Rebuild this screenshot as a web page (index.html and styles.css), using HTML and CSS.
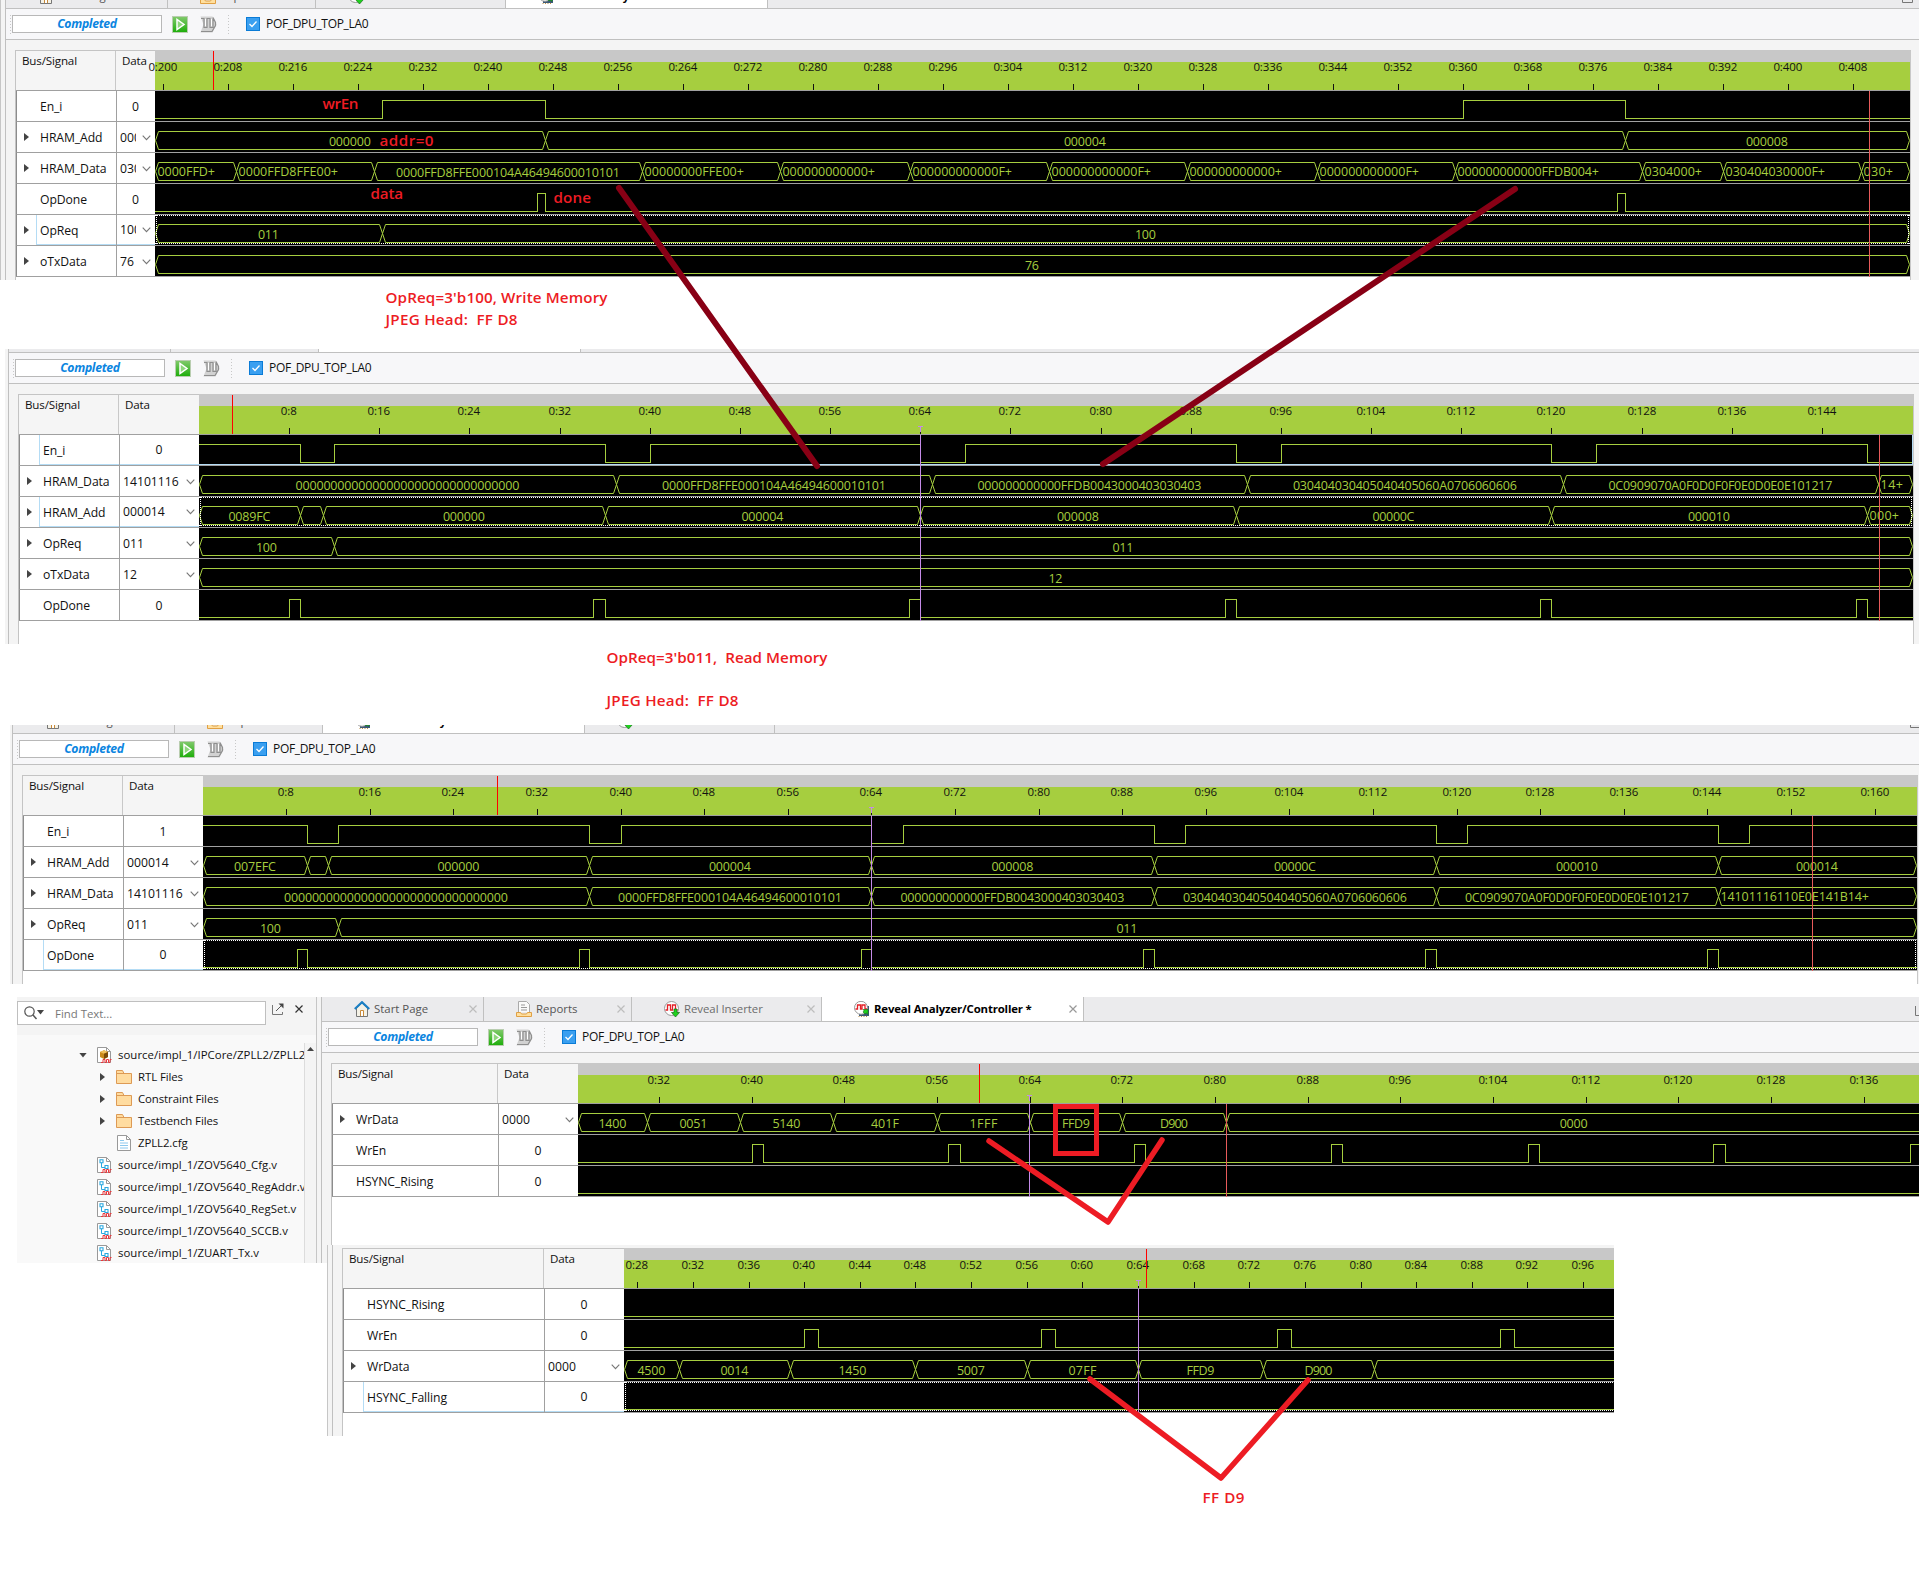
FILE: index.html
```html
<!DOCTYPE html>
<html lang="en">
<head>
<meta charset="utf-8">
<title>Reveal Analyzer captures</title>
<link rel="stylesheet" href="styles.css">
</head>
<body>
<svg class="defs" aria-hidden="true">
  <defs>
    <linearGradient id="runFill" x1="0" y1="0" x2="0" y2="1"><stop offset="0" stop-color="#7fc96a"/><stop offset="1" stop-color="#1fae0c"/></linearGradient>
    <symbol id="i-run" viewBox="0 0 16 17"><rect width="16" height="17" fill="#b9cdb0"/><rect x="1" y="1" width="14" height="15" fill="url(#runFill)"/><path d="M5 3.500v10l7-5z" fill="#8ed67c" stroke="#fff" stroke-width="1.500"/></symbol>
    <symbol id="i-wave" viewBox="0 0 17 17"><path d="M.5.5h12l4 8-4 8H.5l3-8z" fill="#d2d2d2"/><path d="M1 2.500h3v9h3v-9h3v9h3v-9M1 15.500h11l3.500-6v-3l-2.500-5" fill="none" stroke="#8f8f8f" stroke-width="1.200"/><path d="M5.500 3v7M11.500 3v7" stroke="#fff" stroke-width="1"/></symbol>
    <symbol id="i-home" viewBox="0 0 16 16"><path d="M2.500 7v8.500h11V7L8 2z" fill="#f4f1e6" stroke="#777"/><path d="M6.500 15V9.500h3V15" fill="#fff" stroke="#c98a3a"/><path d="M.8 8L8 1.200 15.200 8" fill="none" stroke="#1b7fc4" stroke-width="2.200"/></symbol>
    <symbol id="i-report" viewBox="0 0 16 16"><path d="M2.500 11V.5h8l3 3V11" fill="#fafafa" stroke="#aaa"/><path d="M5 4h4M5 6.500h6M5 9h6" stroke="#999"/><path d="M.5 11.500h4l1 1.500h5l1-1.500h4v4H.5z" fill="#ffdf9e" stroke="#e0a044"/></symbol>
    <symbol id="i-insert" viewBox="0 0 16 16"><circle cx="7.500" cy="7.500" r="7" fill="#fff" stroke="#999"/><path d="M1.500 9h2V4h3v5h2V4h3v5h2" fill="none" stroke="#e31f26" stroke-width="1.300"/><path d="M10 8h3v3.500h2.500L11.500 16 7.500 11.500H10z" fill="#1fd11f" stroke="#176b17" stroke-width=".7"/></symbol>
    <symbol id="i-analyze" viewBox="0 0 16 16"><path d="M5 5h10v10H5z" fill="#3c5a78"/><path d="M5 15v1M7.500 15v1M10 15v1M12.500 15v1" stroke="#bd8f44"/><circle cx="7" cy="6.800" r="6.500" fill="#fff" stroke="#999"/><path d="M1.500 8h2V4h3v4h1.500V4h3v4h2" fill="none" stroke="#e31f26" stroke-width="1.300"/><path d="M9 8.500h5v5l-1.700-1.500-1.300 1-2-2 1-1.300z" fill="#1fd11f" stroke="#176b17" stroke-width=".6"/></symbol>
    <symbol id="i-float" viewBox="0 0 12 12"><path d="M.5 2v9.500h10V9" fill="none" stroke="#777"/><path d="M4 8l6-6" stroke="#555"/><path d="M6.500.5h5v5z" fill="#444"/></symbol>
    <symbol id="i-x" viewBox="0 0 8 8"><path d="M.5.5l7 7M7.500.5l-7 7" fill="none" stroke="currentColor" stroke-width="1.200"/></symbol>
    <symbol id="i-src" viewBox="0 0 15 17"><path d="M.5.500h9l4 4v11H.5z" fill="#fff" stroke="#999"/><path d="M9.500.5v4h4" fill="none" stroke="#999"/><path d="M4.500 5v5.500h4" fill="none" stroke="#29a8e0"/><path d="M3 2.800h3v3H3zM8 8.500h3v3H8z" fill="#fff" stroke="#29a8e0" stroke-width="1.100"/><path d="M4 15.500h2v-3h2v3h1.500v-3h2v3H13v-3h1.500" fill="none" stroke="#e8383d"/></symbol>
    <symbol id="i-core" viewBox="0 0 15 17"><path d="M.5.500h9l4 4v11H.5z" fill="#fff" stroke="#999"/><path d="M9.500.5v4h4" fill="none" stroke="#999"/><path d="M3 5l4-1.800L11 5v5l-4 2-4-2z" fill="#c98a1c"/><path d="M3 5l4 1.700L11 5 7 3.200z" fill="#efc15c"/><path d="M7 6.700L11 5v5l-4 2z" fill="#7a4b08"/><path d="M4 15.500h2v-3h2v3h1.500v-3h2v3H13v-3h1.500" fill="none" stroke="#e8383d"/></symbol>
    <symbol id="i-folder" viewBox="0 0 16 14"><path d="M.5 13.500V.5h6l1.500 3h7.500v10z" fill="#ffdca0" stroke="#dd9a55"/><path d="M1 3.500h8" stroke="#dd9a55"/></symbol>
    <symbol id="i-doc" viewBox="0 0 14 16"><path d="M.5.500h9l4 4v11H.5z" fill="#fff" stroke="#999"/><path d="M9.500.5v4h4" fill="none" stroke="#999"/><path d="M3 5.500h4M3 8h8M3 10.500h8M3 13h8" stroke="#8cc8ee"/></symbol>
  </defs>
</svg>

<main class="board">
  <section class="capture write" id="write"></section>
  <section class="capture read" id="read"></section>
  <section class="capture reread" id="reread"></section>
  <div class="split">
    <aside class="dock">
      <header class="dock-head">
        <div class="search">
          <svg width="20" height="14" viewBox="0 0 20 14"><circle cx="5.500" cy="5.500" r="4.700" fill="none" stroke="#555" stroke-width="1.200"/><path d="M9 9l3.500 4" stroke="#555" stroke-width="1.500"/><path d="M13 4h7l-3.500 4.500z" fill="#444"/></svg>
          <span>Find Text...</span>
        </div>
        <svg class="dock-float" width="12" height="12"><use href="#i-float"/></svg>
        <svg class="dock-x" width="8" height="8"><use href="#i-x"/></svg>
      </header>
      <div class="dock-body">
        <ul class="tree">
          <li class="l1"><i class="tw down"></i><svg width="15" height="17"><use href="#i-core"/></svg>source/impl_1/IPCore/ZPLL2/ZPLL2.ipx</li>
          <li class="l2"><i class="tw"></i><svg width="16" height="14"><use href="#i-folder"/></svg>RTL Files</li>
          <li class="l2"><i class="tw"></i><svg width="16" height="14"><use href="#i-folder"/></svg>Constraint Files</li>
          <li class="l2"><i class="tw"></i><svg width="16" height="14"><use href="#i-folder"/></svg>Testbench Files</li>
          <li class="l2"><i class="tw none"></i><svg width="16" height="16"><use href="#i-doc"/></svg>ZPLL2.cfg</li>
          <li class="l1"><i class="tw none"></i><svg width="15" height="17"><use href="#i-src"/></svg>source/impl_1/ZOV5640_Cfg.v</li>
          <li class="l1"><i class="tw none"></i><svg width="15" height="17"><use href="#i-src"/></svg>source/impl_1/ZOV5640_RegAddr.v</li>
          <li class="l1"><i class="tw none"></i><svg width="15" height="17"><use href="#i-src"/></svg>source/impl_1/ZOV5640_RegSet.v</li>
          <li class="l1"><i class="tw none"></i><svg width="15" height="17"><use href="#i-src"/></svg>source/impl_1/ZOV5640_SCCB.v</li>
          <li class="l1"><i class="tw none"></i><svg width="15" height="17"><use href="#i-src"/></svg>source/impl_1/ZUART_Tx.v</li>
        </ul>
        <div class="scroll"><i></i></div>
      </div>
    </aside>
    <section class="capture tail" id="tail"></section>
  </div>
  <section class="capture zoomed" id="zoomed"></section>

  <svg class="notes" width="1919" height="1594" viewBox="0 0 1919 1594">
    <g class="dark"><path d="M619 188L817 466"/><path d="M1515 189L1103 464"/></g>
    <g class="bright"><path d="M989 1141L1108 1222L1162 1140"/><path d="M1090 1379L1221 1478L1308 1380"/><path class="box" d="M1055.500 1106.500h41v47h-41z"/></g>
    <text x="322.500" y="109" textLength="36">wrEn</text>
    <text x="379.500" y="146" textLength="54">addr=0</text>
    <text x="370.500" y="199" textLength="32.500">data</text>
    <text x="553.500" y="203" textLength="37.500">done</text>
    <text x="385.500" y="303" textLength="222">OpReq=3'b100, Write Memory</text>
    <text x="385.500" y="325" textLength="132">JPEG Head:&#160; FF D8</text>
    <text x="606.500" y="663" textLength="221">OpReq=3'b011,&#160; Read Memory</text>
    <text x="606.500" y="706" textLength="132">JPEG Head:&#160; FF D8</text>
    <text x="1202.500" y="1503" textLength="42">FF D9</text>
  </svg>
</main>
<script src="script.js"></script>
</body>
</html>
```
FILE: styles.css
```css
* { box-sizing: border-box; }
body {
  margin: 0;
  background: #fff;
  color: #111;
  font-family: "Open Sans", "Noto Sans", sans-serif;
  font-size: 11.4px;
  line-height: 16px;
  overflow: hidden;
}
svg { display: block; flex: none; }
.defs { position: absolute; width: 0; height: 0; }
.board { position: relative; height: 1594px; overflow: hidden; }

/* capture window */
.capture { display: flex; overflow: hidden; background: #f4f4f4; }
.edge { flex: none; width: 5px; border-left: 1px solid #c6c6c6; }
.window { flex: 1; min-width: 0; border-left: 1px solid #c0c0c0; display: flex; flex-direction: column; }
.write { height: 280px; }
.read { height: 295px; margin: 69px 0 0 5px; }
.reread { height: 259px; margin: 81px 0 0 10px; }
.tail { flex: 1; min-width: 0; height: 266px; }
.zoomed { position: relative; width: 1287px; height: 191px; margin: -18px 0 0 327px; }
.read .edge { width: 3px; border: 0; }
.reread .edge { width: 2px; border: 0; }

.tabs { flex: none; display: flex; align-items: flex-end; height: 25px; overflow: hidden; background: #ebebed; border-bottom: 1px solid #c0c0c0; }
.write .tabs, .reread .tabs { height: 9px; }
.read .tabs { height: 4px; }
.tab { flex: none; display: flex; align-items: center; height: 24px; padding: 0 6px 0 32px; border-right: 1px solid #c0c0c0; color: #555; }
.tab svg:first-child { margin-right: 4px; }
.tab .x { margin-left: auto; color: #bdbdbd; }
.tab.start { width: 162px; }
.tab.reports { width: 148px; }
.tab.inserter { width: 190px; color: #6c6c6c; letter-spacing: -.04px; }
.tab.analyzer { width: 262px; background: #fff; color: #000; font-weight: 700; letter-spacing: -.16px; }
.tab.analyzer .x { color: #999; }
.pop { margin: 0 5px 5px auto; }
.reread .pop { margin-right: -3px; }
.tail .pop { margin-right: -8px; }

.toolbar { flex: none; display: flex; align-items: center; height: 31px; background: #f7f7f9; border-bottom: 1px solid #c0c0c0; }
.grip { width: 1px; height: 19px; margin-left: 4px; background: repeating-linear-gradient(#c8c8c8 0 1px, transparent 1px 3px); }
.status { width: 150px; height: 18px; margin-left: 1px; border: 1px solid #b8b8b8; background: #fff; color: #0b85e0; font-weight: 700; font-style: italic; font-size: 12.200px; text-align: center; letter-spacing: -.3px; }
.run { margin-left: 10px; }
.wav { margin-left: 12px; }
.toolbar .grip.second { margin-left: 11px; }
.check { width: 14px; height: 14px; margin-left: 17px; border: 1px solid #0a7bd6; background: #3a9ff0; }
.core { margin-left: 6px; letter-spacing: -.32px; font-size: 12px; }

/* signal table */
.table { flex: 1; margin: 10px 0 0 9px; border-left: 1px solid #c4c4c4; border-top: 1px solid #c4c4c4; background: #fff; }
.zoomed .table { margin-top: 3px; }
.write .table { margin-right: 8px; border-right: 1px solid #c8c8c8; }
.read .table { margin-right: 5px; border-right: 1px solid #c8c8c8; }
.reread .table { margin-right: 1px; border-right: 1px solid #c8c8c8; }
.head, .row { display: flex; border-bottom: 1px solid #a0a0a0; }
.head { height: 40px; background: #f5f5f5; }
.row { height: 31px; border-left: 1px solid #8c8c8c; font-size: 12.200px; }
.h-name, .h-data { flex: none; padding: 2px 6px; font-size: 11.600px; letter-spacing: -.15px; }
.h-name { border-right: 1px solid #c8c8c8; }
.name { flex: none; display: flex; align-items: center; padding-left: 7px; border-right: 1px solid #a0a0a0; }
.name span { display: flex; align-items: center; flex: 1; height: 30px; margin-left: 7px; padding: 1px 0 0 4px; letter-spacing: -.08px; }
.sel .name span { border-left: 1px solid #b4dcf5; border-bottom: 1px solid #b4dcf5; padding: 2px 0 0 3px; }
.sel .val { border-bottom: 1px solid #b4dcf5; }
.tw { flex: none; width: 5px; height: 8px; background: #444; clip-path: polygon(0 0, 100% 50%, 0 100%); }
.tw.none { background: none; }
.tw.down { width: 8px; height: 5px; clip-path: polygon(0 0, 100% 0, 50% 100%); }
.val { flex: none; display: flex; align-items: center; height: 30px; padding: 1px 0 0 3px; }
.val.bit { justify-content: center; padding: 1px 1px 0 0; }
.val b { flex: 1; min-width: 0; font-weight: 400; overflow: hidden; white-space: nowrap; letter-spacing: 0; }
.val svg { margin: 0 4px; }
.write .val svg { margin-left: 6px; }

/* widths of the two left columns */
.write .h-name, .write .name { width: 100px; }
.write .h-data { width: 39px; }
.write .val { width: 38px; }
.read .h-name, .read .name, .reread .h-name, .reread .name { width: 100px; }
.tail .h-name, .tail .name { width: 166px; }
.zoomed .h-name, .zoomed .name { width: 201px; }
.read .h-data, .reread .h-data, .tail .h-data, .zoomed .h-data { width: 80px; }
.read .val, .reread .val, .tail .val, .zoomed .val { width: 79px; }

/* waveforms */
.ruler { overflow: visible; shape-rendering: crispEdges; }
.ruler text { font-size: 11.500px; text-anchor: middle; fill: #111; letter-spacing: -.1px; }
.ruler .tick { stroke: #111; }
.wave { background: #000; overflow: visible; shape-rendering: crispEdges; }
.wave .sig { fill: none; stroke: #a6ce3f; }
.wave .bus { fill: none; stroke: #a6ce3f; shape-rendering: auto; }
.wave text { fill: #a6ce3f; font-size: 12.500px; }
.wave .mid { text-anchor: middle; }
.focus { fill: none; stroke: #fff; stroke-dasharray: 1 1; }
.mark { stroke: #f00; }
.cursor { stroke: #e85a5a; }
.trig { stroke: #c58be8; fill: none; }

/* file dock */
.split { display: flex; margin: 13px 0 0 17px; }
.dock { flex: none; width: 299px; height: 266px; background: #f4f4f4; overflow: hidden; }
.dock-head { display: flex; height: 38px; padding-top: 4px; }
.search { display: flex; align-items: center; gap: 11px; width: 249px; height: 24px; padding-left: 6px; border: 1px solid #bfbfbf; background: #fff; color: #777; }
.search span { letter-spacing: 0; padding-top: 2px; }
.dock-float { margin: 2px 0 0 6px; }
.dock-x { margin: 4px 0 0 11px; color: #333; }
.dock-body { display: flex; height: 228px; background: #f9f9f9; }
.tree { flex: 1; min-width: 0; margin: 0; padding: 9px 0 0; list-style: none; overflow: hidden; }
.tree li { display: flex; align-items: center; height: 22px; white-space: nowrap; }
.tree svg { margin-right: 6px; }
.tree .l1 { padding-left: 62px; letter-spacing: .04px; }
.tree .l2 { padding-left: 83px; letter-spacing: -.08px; }
.l1 .tw { width: 8px; margin-right: 10px; }
.l2 .tw { margin-right: 11px; }
.scroll { flex: none; width: 12px; margin-top: 8px; border-left: 1px solid #dcdcdc; background: #f4f4f4; }
.scroll i { display: block; width: 7px; height: 4px; margin: 4px 0 0 2px; background: #444; clip-path: polygon(50% 0, 100% 100%, 0 100%); }

/* hand-drawn notes over the captures */
.notes { position: absolute; left: 0; top: 0; }
.notes path { fill: none; stroke-width: 5.500; stroke-linecap: round; stroke-linejoin: round; }
.notes .dark path { stroke: #880015; stroke-width: 6; }
.notes .bright { stroke: #ed1c24; }
.notes .box { stroke-width: 5; stroke-linejoin: miter; stroke-linecap: square; }
.notes text { fill: #ed1c24; font-size: 15.200px; font-weight: 600; }
```
FILE: script.js
```js
const ZERO = "0".repeat(32);
const D8 = "0000FFD8FFE000104A46494600010101";
const DB = "000000000000FFDB0043000403030403";
const Q3 = "030404030405040405060A0706060606";
const Q4 = "0C0909070A0F0D0F0F0E0D0E0E101217";

// x(t) = origin + scale * t; left/right bound the waveform area.
const captures = {
  write: {
    tabs: ["start", "reports", "inserter", "analyzer"], left: 155, right: 1910, origin: -1461.6, scale: 8.125,
    ticks: [200, 408, 8], mark: 213, cursor: 1869,
    rows: [
      { name: "En_i", val: "0", bit: [0, 227, 247, 360, 380] },
      { name: "HRAM_Add", val: "000008", bus: [247, 380], text: ["000000", "000004", "000008"] },
      { name: "HRAM_Data", val: "030404", bus: [209, 226, 259, 276, 292, 309, 326, 342, 359, 382, 392, 409],
        text: ["0000FFD+", "0000FFD8FFE00+", D8, "00000000FFE00+", "000000000000+", "000000000000F+", "000000000000F+", "000000000000+", "000000000000F+", "000000000000FFDB004+", "0304000+", "030404030000F+", "030+"] },
      { name: "OpDone", val: "0", bit: [0, 246, 247, 379, 380] },
      { name: "OpReq", val: "100", bus: [227], text: ["011", "100"], sel: true, focus: true },
      { name: "oTxData", val: "76", bus: [], text: ["76"] }
    ]
  },
  read: {
    tabs: ["start", "reports", "analyzer"], bare: true, left: 199, right: 1913, origin: 199.5, scale: 11.27,
    ticks: [8, 144, 8], mark: 232, trig: 920, cursor: 1879,
    rows: [
      { name: "En_i", val: "0", bit: [1, 9, 12, 36, 40, 64, 68, 92, 96, 120, 124, 148], sel: true, band: true },
      { name: "HRAM_Data", val: "14101116", bus: [37, 65, 93, 121, 149], text: [ZERO, D8, DB, Q3, Q4, "14+"] },
      { name: "HRAM_Add", val: "000014", bus: [9, 11, 36, 64, 92, 120, 148], text: ["0089FC", "", "000000", "000004", "000008", "00000C", "000010", "000+"], sel: true, focus: true },
      { name: "OpReq", val: "011", bus: [12], text: ["100", "011"] },
      { name: "oTxData", val: "12", bus: [], text: ["12"] },
      { name: "OpDone", val: "0", bit: [0, 8, 9, 35, 36, 63, 64, 91, 92, 119, 120, 147, 148] }
    ]
  },
  reread: {
    tabs: ["start", "reports", "analyzer", "inserter"], left: 203, right: 1917, origin: 203.1, scale: 10.45,
    ticks: [8, 160, 8], mark: 497, trig: 871, cursor: 1812,
    rows: [
      { name: "En_i", val: "1", bit: [1, 10, 13, 37, 40, 64, 67, 91, 94, 118, 121, 145, 148] },
      { name: "HRAM_Add", val: "000014", bus: [10, 12, 37, 64, 91, 118, 145], text: ["007EFC", "", "000000", "000004", "000008", "00000C", "000010", "000014"] },
      { name: "HRAM_Data", val: "14101116", bus: [37, 64, 91, 118, 145], text: [ZERO, D8, DB, Q3, Q4, "14101116110E0E141B14+"] },
      { name: "OpReq", val: "011", bus: [13], text: ["100", "011"] },
      { name: "OpDone", val: "0", bit: [0, 9, 10, 36, 37, 63, 64, 90, 91, 117, 118, 144, 145], sel: true, focus: true }
    ]
  },
  tail: {
    tabs: ["start", "reports", "inserter", "analyzer"], left: 578, right: 1919, open: true, origin: 288.6, scale: 11.585,
    ticks: [32, 136, 8], mark: 979, trig: 1029, cursor: 1226,
    rows: [
      { name: "WrData", val: "0000", bus: [31, 39, 47, 56, 64, 72, 81], text: ["1400", "0051", "5140", "401F", "1FFF", "FFD9", "D900", "0000"] },
      { name: "WrEn", val: "0", bit: [0, 40, 41, 57, 58, 73, 74, 90, 91, 107, 108, 123, 124, 140] },
      { name: "HSYNC_Rising", val: "0", bit: [0] }
    ]
  },
  zoomed: {
    left: 624, right: 1614, open: true, origin: 248.4, scale: 13.908,
    ticks: [28, 96, 4], mark: 1146, trig: 1138,
    rows: [
      { name: "HSYNC_Rising", val: "0", bit: [0] },
      { name: "WrEn", val: "0", bit: [0, 40, 41, 57, 58, 74, 75, 90, 91] },
      { name: "WrData", val: "0000", bus: [31, 39, 48, 56, 64, 73, 81], text: ["4500", "0014", "1450", "5007", "07FF", "FFD9", "D900", ""] },
      { name: "HSYNC_Falling", val: "0", bit: [0], sel: true, focus: true }
    ]
  }
};

const tabInfo = {
  start: ["i-home", "Start Page"],
  reports: ["i-report", "Reports"],
  inserter: ["i-insert", "Reveal Inserter"],
  analyzer: ["i-analyze", "Reveal Analyzer/Controller *"]
};

const icon = (id, w, h, cls = "") => `<svg class="${cls}" width="${w}" height="${h}"><use href="#${id}"/></svg>`;
const at = (c, t) => Math.floor(c.origin + c.scale * t) + 0.5;
const frame = (c, cls, h, body) =>
  `<svg class="${cls}" width="${c.right - c.left}" height="${h}" viewBox="${c.left} 0 ${c.right - c.left} ${h}">${body}</svg>`;

function ruler(c) {
  let s = `<rect x="${c.left}" y="-1" width="${c.right - c.left}" height="12" fill="#c8c8c8"/><rect x="${c.left}" y="11" width="${c.right - c.left}" height="28" fill="#a6ce3f"/>`;
  for (let t = c.ticks[0]; t <= c.ticks[1]; t += c.ticks[2]) {
    const x = at(c, t);
    s += `<path class="tick" d="M${x} 33V39"/><text x="${x - 0.7}" y="20">0:${t}</text>`;
  }
  if (c.trig) s += `<path class="trig" d="M${c.trig - 2} 31.500h5M${c.trig + 0.5} 31V37"/>`;
  s += `<path class="mark" d="M${c.mark + 0.5} 0V39"/>`;
  return frame(c, "ruler", 39, s);
}

function bitPath(c, [level, ...edges]) {
  const y = () => (level ? 9.5 : 27.5);
  let d = `M${c.left} ${y()}`;
  for (const t of edges) {
    d += `H${at(c, t)}`;
    level = 1 - level;
    d += `V${y()}`;
  }
  return `<path class="sig" d="${d}H${c.right}"/>`;
}

function busPath(c, edges, labels) {
  const xs = [c.left + 0.5, ...edges.map(t => at(c, t)), c.open ? null : c.right - 0.5];
  let s = "";
  labels.forEach((label, i) => {
    const a = xs[i], b = xs[i + 1];
    s += b === null
      ? `<path class="bus" d="M${c.right} 9.500H${a + 3}L${a} 18.500L${a + 3} 27.500H${c.right}"/>`
      : `<path class="bus" d="M${a} 18.500L${a + 3} 9.500H${b - 3}L${b} 18.500L${b - 3} 27.500H${a + 3}Z"/>`;
    if (!label) return;
    if (label.endsWith("+")) s += `<text x="${a + 2}" y="23" textLength="${(label.length - 1) * 7 + 8.5}">${label}</text>`;
    else s += `<text class="mid" x="${(a + (b ?? c.right + 3)) / 2 - 0.6}" y="24" textLength="${label.length * 7}">${label}</text>`;
  });
  return s;
}

function row(c, r) {
  let s = r.bit ? bitPath(c, r.bit) : busPath(c, r.bus, r.text);
  if (r.focus) s += `<path class="focus" d="M${c.left} .5H${c.right}M${c.left} 28.500H${c.right}M${c.left + 1.5} 0V29${c.open ? "" : `M${c.right - 1.5} 0V29`}"/>`;
  if (r.band) s += `<path d="M${c.left} 29.500H${c.right - 0.5}V0" fill="none" stroke="#b4dcf5"/>`;
  if (c.trig) s += `<path class="trig" d="M${c.trig + 0.5} 0V31"/>`;
  if (c.cursor) s += `<path class="cursor" d="M${c.cursor + 0.5} 0V31"/>`;
  const value = r.bit
    ? `<div class="val bit">${r.val}</div>`
    : `<div class="val"><b>${r.val}</b><svg width="9" height="6" viewBox="0 0 9 6"><path d="M.7.7l3.800 4 3.800-4" fill="none" stroke="#777" stroke-width="1.100"/></svg></div>`;
  return `<div class="row${r.sel ? " sel" : ""}"><div class="name"><i class="tw${r.bus ? "" : " none"}"></i><span>${r.name}</span></div>${value}${frame(c, "wave", 30, s)}</div>`;
}

function chrome(c) {
  if (!c.tabs) return "";
  const face = k => (c.bare ? "" : `${icon(tabInfo[k][0], 16, 16)}${tabInfo[k][1]}${icon("i-x", 8, 8, "x")}`);
  const tabs = c.tabs.map(k => `<div class="tab ${k}">${face(k)}</div>`).join("");
  return `<nav class="tabs">${tabs}${c.bare ? "" : icon("i-float", 12, 12, "pop")}</nav>
    <div class="toolbar"><i class="grip"></i><div class="status">Completed</div>${icon("i-run", 16, 17, "run")}${icon("i-wave", 17, 17, "wav")}<i class="grip second"></i>
    <svg class="check" viewBox="0 0 12 12"><path d="M2.500 6l2.500 2.500 4.500-5" fill="none" stroke="#fff" stroke-width="1.300"/></svg><span class="core">POF_DPU_TOP_LA0</span></div>`;
}

for (const [id, c] of Object.entries(captures)) {
  document.getElementById(id).innerHTML = `<div class="edge"></div><div class="window">${chrome(c)}<div class="table">
    <div class="head"><div class="h-name">Bus/Signal</div><div class="h-data">Data</div>${ruler(c)}</div>${c.rows.map(r => row(c, r)).join("")}</div></div>`;
}
```
